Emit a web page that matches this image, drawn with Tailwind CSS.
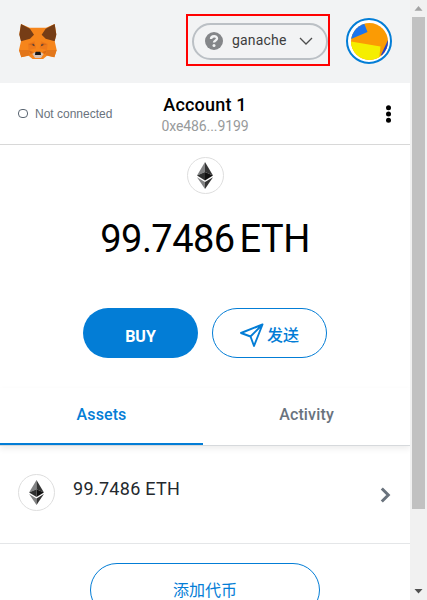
<!DOCTYPE html>
<html lang="zh-CN">
<head>
<meta charset="utf-8">
<title>MetaMask</title>
<script src="https://cdn.jsdelivr.net/npm/@tailwindcss/browser@4"></script>
</head>
<body class="flex h-[600px] w-[427px] overflow-hidden bg-white font-['Roboto','Noto_Sans_CJK_SC',sans-serif] text-black">
<svg class="hidden">
  <symbol id="eth" viewBox="0 0 16 27">
    <path fill="#828384" d="M8 0 0 13.5 8 10z"/><path fill="#343434" d="M8 0v10l8 3.5z"/>
    <path fill="#2f3030" d="m0 13.5 8-3.6v8.5z"/><path fill="#111" d="m16 13.5-8-3.6v8.5z"/>
    <path fill="#828384" d="m0 15.2 8 4.7V27z"/><path fill="#343434" d="m16 15.2-8 4.7V27z"/>
  </symbol>
</svg>
<main class="flex w-[410px] shrink-0 flex-col">
  <header class="flex h-[83px] shrink-0 items-start bg-[#f2f3f4] pl-[18px]">
    <svg class="mt-[23px] h-9 w-[40px] shrink-0" viewBox="24 24 120 108">
      <path fill="#f6851b" d="M33 27 59 38h49l26-11 5 30-5 21 6 27-7 22-22-5-14 12H70l-14-12-22 5-7-22 6-27-5-21z"/>
      <path fill="#e2761b" d="M27 105h29l4 15-26 7zM140 105h-29l-4 15 26 7z"/>
      <path fill="#ed7a1c" d="m54 86 20-7 4 21-22 5zM113 86l-20-7-4 21 22 5z"/>
      <path fill="#763d16" d="m33 27 27 14 12 18-12 12-27 8-5-20zM134 27l-27 14-12 18 12 12 27 8 5-20z"/>
      <path fill="#d96a17" d="m56 88 15-5 5 12zM111 88l-15-5-5 12zM56 106l14 5-8 7zM111 106l-14 5 8 7z"/>
      <path fill="#233447" d="m65 89 7-1 2 5zM102 89l-7-1-2 5z"/>
      <path fill="#d7c1b3" d="m67 117 8-5h18l8 5-8 12H75z"/>
      <path fill="#161616" d="m76 112 2-2h12l2 2 1 8H75z"/>
    </svg>
    <div class="ml-[128px] mt-[14px] flex h-[52px] w-[144px] shrink-0 items-center border-2 border-[#ff0000] pt-[3px] pl-1">
      <div class="flex h-[37px] w-[136px] shrink-0 items-center rounded-full border-2 border-[#bbc0c5] pb-px pl-[11px]">
        <svg class="h-[18px] w-[18px] shrink-0" viewBox="0 0 18 18"><circle cx="9" cy="9" r="9" fill="#848689"/><path d="M6 7c.2-3.500 6-3.500 6-.5 0 2-3 1.800-3 4" fill="none" stroke="#f2f3f4" stroke-width="2.400"/><circle cx="9" cy="13.500" r="1.500" fill="#f2f3f4"/></svg>
        <span class="mb-[2px] ml-[9px] w-[54px] whitespace-nowrap text-[14px] leading-5 font-normal tracking-[0.18px] text-[#3d3d3d]">ganache</span>
        <svg class="ml-[13px] h-[8px] w-[14px] shrink-0" viewBox="0 0 14 8"><path d="m1 1 6 6 6-6" fill="none" stroke="#4d4d4d" stroke-width="1.300"/></svg>
      </div>
    </div>
    <div class="ml-4 mt-[18px] flex h-[46px] w-[46px] shrink-0 items-center justify-center rounded-full border-2 border-[#037dd6] bg-white">
      <svg class="h-[37px] w-[37px] rounded-full" viewBox="0 0 37 37"><path fill="#fb9b04" d="M0 0h37v37H0z"/><path fill="#1b74ee" d="M0 0h13l3.500 9L0 16z"/><path fill="#f5ee00" d="m0 18.500 29.500 5L28 37H0z"/><path fill="#233fc9" d="m37 17-7 15v5h7z"/></svg>
    </div>
  </header>
  <section class="grid h-[62px] shrink-0 grid-cols-[1fr_126px_1fr] border-b border-[#d8d8d8]">
    <div class="flex items-center pl-[18px]"><span class="h-[9px] w-[10px] rounded-[4px] border border-[#5b6672]"></span><span class="ml-[7px] whitespace-nowrap font-['Liberation_Sans'] text-[12px] text-[#6a737d]">Not connected</span></div>
    <div class="flex flex-col items-center pt-[9px] whitespace-nowrap"><h1 class="text-[18px] leading-[25px] font-medium tracking-[0.2px]">Account 1</h1><p class="text-[14px] leading-[19px] tracking-[-0.08px] text-[#989a9b]">0xe486...9199</p></div>
    <div class="flex items-center justify-end pr-[19px]"><svg class="h-[18px] w-[5px]" viewBox="0 0 5 18"><circle cx="2.500" cy="2.800" r="2.500"/><circle cx="2.500" cy="9" r="2.500"/><circle cx="2.500" cy="15.200" r="2.500"/></svg></div>
  </section>
  <section class="flex h-[243px] shrink-0 flex-col items-center pt-3">
    <div class="flex h-[37px] w-[37px] items-center justify-center rounded-full border border-[#dedede]"><svg class="h-[27px] w-4"><use href="#eth"/></svg></div>
    <div class="mt-[21px] flex h-[48px] gap-[5px] whitespace-nowrap text-[38px] leading-[48px] tracking-[-0.55px]"><span>99.7486</span><span>ETH</span></div>
    <div class="mt-[45px] flex gap-[14px]">
      <button class="h-[50px] w-[115px] rounded-full bg-[#037dd6] pt-[7px] text-[16px] font-bold text-white">BUY</button>
      <button class="flex h-[50px] w-[115px] items-center justify-center rounded-full border border-[#037dd6] text-[16px] font-medium text-[#037dd6]"><svg class="mr-[3px] mt-[3px] h-6 w-6" viewBox="0 0 24 24"><path d="M22.500 1.500 1 10l9.500 3.500L14 23zM10.500 13.500l12-12" fill="none" stroke="#037dd6" stroke-width="1.900" stroke-linejoin="round"/></svg><span class="pt-[5px]">发送</span></button>
    </div>
  </section>
  <nav class="grid h-[58px] shrink-0 grid-cols-[203px_207px] border-b border-[#d6d9dc] text-center text-[16px] font-medium shadow-[0_3px_6px_rgba(0,0,0,0.07)]">
    <div class="border-b-2 border-[#037dd6] pt-[15px] tracking-[0.1px] text-[#037dd6]">Assets</div>
    <div class="pt-[15px] tracking-[0.15px] text-[#6a737d]">Activity</div>
  </nav>
  <section class="flex h-[98px] shrink-0 items-center border-b border-[#e4e6e8] pr-[19px] pl-[18px]">
    <div class="mb-[5px] flex h-[37px] w-[37px] items-center justify-center rounded-full border border-[#dedede]"><svg class="h-[25px] w-[15px]"><use href="#eth"/></svg></div>
    <span class="mb-[12px] ml-[18px] text-[18px] tracking-[0.3px] text-[#24292e]">99.7486 ETH</span>
    <svg class="ml-auto h-4 w-[11px]" viewBox="0 0 11 16"><path d="m1.800 1.500 6.500 6.500-6.500 6.500" fill="none" stroke="#6a737d" stroke-width="3"/></svg>
  </section>
  <button class="mt-[19px] ml-[90px] flex h-[54px] w-[230px] shrink-0 items-center justify-center rounded-full border border-[#037dd6] pt-[2px] text-[16px] font-normal text-[#037dd6]">添加代币</button>
</main>
<aside class="flex h-[600px] w-[17px] shrink-0 flex-col items-center bg-[#f1f1f1]">
  <svg class="h-[17px] w-[17px] shrink-0" viewBox="0 0 17 17"><path fill="#a3a3a3" d="m8.500 6 4 4.800h-8z"/></svg>
  <div class="h-[492px] w-[13px] bg-[#c1c1c1]"></div>
  <svg class="mt-auto h-[17px] w-[17px] shrink-0" viewBox="0 0 17 17"><path fill="#505050" d="M4.500 6h8l-4 4.500z"/></svg>
</aside>
</body>
</html>
